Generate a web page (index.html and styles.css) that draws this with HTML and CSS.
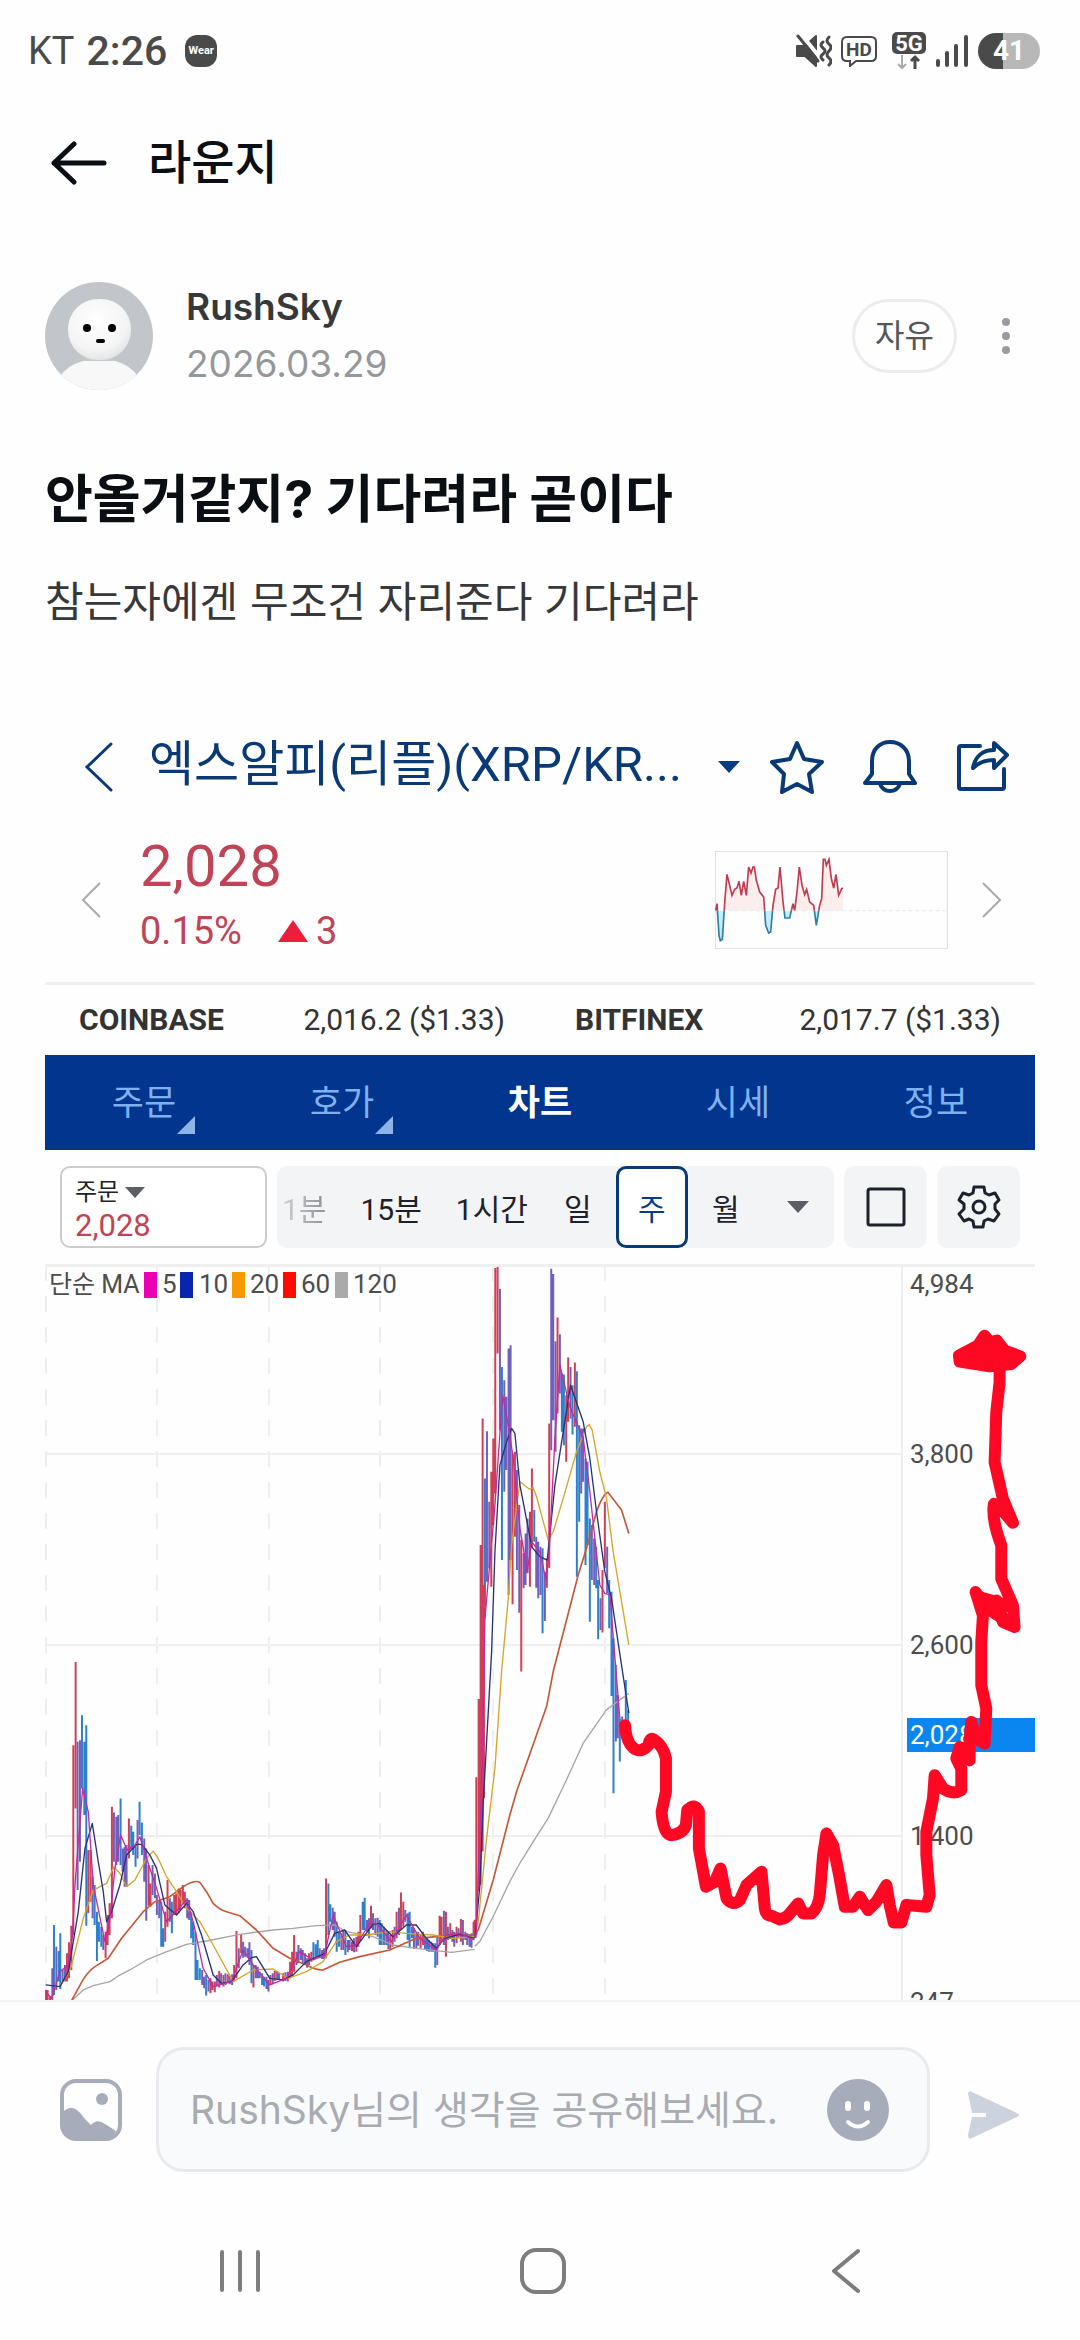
FILE: index.html
```html
<!DOCTYPE html>
<html lang="ko">
<head>
    <meta charset="UTF-8">
    <meta name="viewport" content="width=device-width, initial-scale=1.0">
    <title>라운지</title>
    <link rel="stylesheet" href="styles.css">
</head>
<body>
    <div class="status-bar">
        <div class="status-left">
            <span class="carrier">KT</span>
            <span class="clock">2:26</span>
            <span class="wear">Wear</span>
        </div>
        <div class="status-right">
            <svg width="38" height="34" viewBox="0 0 38 34" fill="none" stroke="#4a4a4a" stroke-linecap="round">
                <path d="M3 12h8l11-10v30l-11-10H3z" fill="#4a4a4a" stroke-width="2" stroke-linejoin="round"/>
                <path d="M7 0l20 25" stroke="#fefefe" stroke-width="4"/>
                <path d="M4 2l20 25" stroke-width="3"/>
                <path d="M29 8q-4 3 0 6t0 6 0 6M35 3q-4 4 0 7t0 7 0 7 0 7" stroke-width="3"/>
            </svg>
            <svg class="hd" width="36" height="32" viewBox="0 0 36 32">
                <path d="M6 2h24q5 0 5 5v14q0 5-5 5H15l-6 5v-5H6q-5 0-5-5V7q0-5 5-5z" fill="none" stroke="#4a4a4a" stroke-width="2"/>
                <text x="18" y="21" text-anchor="middle">HD</text>
            </svg>
            <svg class="net" width="34" height="38" viewBox="0 0 34 38">
                <rect width="34" height="22" rx="5" fill="#4a4a4a"/>
                <text x="17" y="19" text-anchor="middle">5G</text>
                <path d="M10 23v13M6 32l4 4 4-4" fill="none" stroke="#aaa" stroke-width="2"/>
                <path d="M23 37V25M19 29l4-4 4 4" fill="none" stroke="#4a4a4a" stroke-width="3"/>
            </svg>
            <svg width="34" height="34" viewBox="0 0 34 34" stroke="#4a4a4a" stroke-width="4" stroke-linecap="round">
                <path d="M3 27v4M12 19v12M21 12v19M31 3v28"/>
            </svg>
            <span class="battery">41</span>
        </div>
    </div>

    <header class="page-header">
        <button class="icon-btn" aria-label="뒤로">
            <svg width="56" height="44" viewBox="0 0 56 44" fill="none" stroke="#0b0e12" stroke-width="5" stroke-linecap="round" stroke-linejoin="round">
                <path d="M53 22H3M23 3L3 22l20 19"/>
            </svg>
        </button>
        <h1>라운지</h1>
    </header>

    <main class="post">
        <div class="author">
            <svg class="avatar" viewBox="0 0 108 108">
                <defs>
                    <clipPath id="round"><circle cx="54" cy="54" r="54"/></clipPath>
                    <radialGradient id="skin" cx="45%" cy="35%" r="70%">
                        <stop offset="0" stop-color="#fff"/>
                        <stop offset=".7" stop-color="#f4f4f5"/>
                        <stop offset="1" stop-color="#dfe0e2"/>
                    </radialGradient>
                </defs>
                <g clip-path="url(#round)">
                    <rect width="108" height="108" fill="#c2c6cb"/>
                    <path d="M10 108Q16 78 54 77q38 1 44 31z" fill="#f8f8f9"/>
                    <path d="M40 78h28" stroke="#c9cacd" stroke-width="2"/>
                    <rect x="23" y="17" width="63" height="61" rx="30" fill="url(#skin)"/>
                    <circle cx="42" cy="46" r="4"/>
                    <circle cx="67" cy="46" r="4"/>
                    <rect x="51" y="57" width="9" height="4" rx="2"/>
                </g>
            </svg>
            <div class="author-info">
                <strong>RushSky</strong>
                <time datetime="2026-03-29">2026.03.29</time>
            </div>
            <a class="tag" href="#">자유</a>
            <button class="icon-btn" aria-label="더보기">
                <svg width="16" height="38" viewBox="0 0 16 38" fill="#999c9f">
                    <circle cx="8" cy="5" r="4"/><circle cx="8" cy="19" r="4"/><circle cx="8" cy="33" r="4"/>
                </svg>
            </button>
        </div>

        <h2>안올거같지? 기다려라 곧이다</h2>
        <p class="post-text">참는자에겐 무조건 자리준다 기다려라</p>

        <section class="exchange">
            <div class="coin-bar">
                <button class="icon-btn" aria-label="이전">
                    <svg width="30" height="52" viewBox="0 0 30 52" fill="none" stroke="#0a3a75" stroke-width="3" stroke-linecap="round"><path d="M27 3L3 26l24 23"/></svg>
                </button>
                <span class="coin-name">엑스알피(리플)(XRP/KR...</span>
                <svg width="22" height="12" viewBox="0 0 22 12" fill="#0a3a7f"><path d="M0 0h22L11 12z"/></svg>
                <div class="coin-actions">
                    <button class="icon-btn" aria-label="관심">
                        <svg width="54" height="54" viewBox="0 0 54 54" class="line-icon"><path d="M27 3l7 16 18 3-13 12 3 18-15-8-15 8 2-18L2 22l18-3z"/></svg>
                    </button>
                    <button class="icon-btn" aria-label="알림">
                        <svg width="54" height="54" viewBox="0 0 54 54" class="line-icon"><path d="M9 34V21C9 9 17 2 27 2s19 7 19 19v13l6 9H2zM17 44c2 5 5 7 10 7s8-2 10-7"/></svg>
                    </button>
                    <button class="icon-btn" aria-label="공유">
                        <svg width="54" height="54" viewBox="0 0 54 54" class="line-icon"><path d="M24 6H5q-2 0-2 2v39q0 2 2 2h41q2 0 2-2V29M38 3l13 12-13 13v-8c-10 0-16 3-21 8 2-11 9-18 21-18z"/></svg>
                    </button>
                </div>
            </div>

            <div class="quote">
                <svg width="20" height="36" viewBox="0 0 20 36" fill="none" stroke="#aaa" stroke-width="2"><path d="M19 1L2 18l17 17"/></svg>
                <div class="quote-price">
                    <strong>2,028</strong>
                    <div class="quote-change">
                        <span>0.15%</span>
                        <svg width="30" height="22" viewBox="0 0 30 22" fill="#ec1f3b"><path d="M15 0l15 22H0z"/></svg>
                        <span>3</span>
                    </div>
                </div>
                <svg class="spark" viewBox="466 447 699 294">
                    <defs>
                        <clipPath id="above"><rect x="466" y="447" width="699" height="179"/></clipPath>
                        <clipPath id="below"><rect x="466" y="626" width="699" height="115"/></clipPath>
                        <path id="area" d="M468 626L472 605 478 700 482 716 488 712 496 590 502 517 510 550 517 580 525 562 532 558 538 538 545 580 552 538 560 580 567 495 574 513 580 495 584 495 590 535 600 570 612 585 618 670 627 693 633 690 640 610 648 562 655 558 661 495 670 600 676 648 690 648 700 605 705 625 712 570 719 495 727 550 735 578 741 562 750 600 762 610 770 670 780 610 786 590 791 472 796 472 800 490 808 472 815 530 822 558 829 517 837 580 846 560 850 558V626z"/>
                        <path id="trend" d="M468 626L472 605 478 700 482 716 488 712 496 590 502 517 510 550 517 580 525 562 532 558 538 538 545 580 552 538 560 580 567 495 574 513 580 495 584 495 590 535 600 570 612 585 618 670 627 693 633 690 640 610 648 562 655 558 661 495 670 600 676 648 690 648 700 605 705 625 712 570 719 495 727 550 735 578 741 562 750 600 762 610 770 670 780 610 786 590 791 472 796 472 800 490 808 472 815 530 822 558 829 517 837 580 846 560 850 558"/>
                    </defs>
                    <rect x="467" y="448" width="696" height="292" fill="none" stroke="#ddd" stroke-width="3"/>
                    <path d="M468 626h694" stroke="#ddd" stroke-width="2" stroke-dasharray="10 10"/>
                    <g clip-path="url(#above)">
                        <use href="#area" fill="#fdeeee"/>
                        <use href="#trend" fill="none" stroke="#c23a50" stroke-width="5"/>
                    </g>
                    <g clip-path="url(#below)">
                        <use href="#area" fill="#c8ecfa"/>
                        <use href="#trend" fill="none" stroke="#2b7ea8" stroke-width="5"/>
                    </g>
                </svg>
                <svg width="20" height="36" viewBox="0 0 20 36" fill="none" stroke="#aaa" stroke-width="2"><path d="M1 1l17 17L1 35"/></svg>
            </div>

            <div class="markets">
                <div><b>COINBASE</b><span>2,016.2 ($1.33)</span></div>
                <div><b>BITFINEX</b><span>2,017.7 ($1.33)</span></div>
            </div>

            <nav class="tabs">
                <a class="has-menu" href="#"><span>주문</span></a>
                <a class="has-menu" href="#"><span>호가</span></a>
                <a class="active" href="#"><span>차트</span></a>
                <a href="#"><span>시세</span></a>
                <a href="#"><span>정보</span></a>
            </nav>

            <div class="toolbar">
                <button class="order">
                    <span class="order-label">주문 <svg width="20" height="11" viewBox="0 0 20 11" fill="#5b5e62"><path d="M0 0h20L10 11z"/></svg></span>
                    <span class="order-price">2,028</span>
                </button>
                <div class="range">
                    <button class="faded">1분</button>
                    <button>15분</button>
                    <button>1시간</button>
                    <button>일</button>
                    <button class="selected">주</button>
                    <button>월</button>
                    <button class="more" aria-label="더 보기"><svg width="22" height="12" viewBox="0 0 22 12" fill="#5b5e62"><path d="M0 0h22L11 12z"/></svg></button>
                </div>
                <button class="tool" aria-label="전체 화면">
                    <svg width="40" height="40" viewBox="0 0 40 40" fill="none" stroke="#1d212b" stroke-width="3"><rect x="2" y="2" width="36" height="36" rx="2"/></svg>
                </button>
                <button class="tool" aria-label="설정">
                    <svg width="44" height="44" viewBox="0 0 44 44" fill="none" stroke="#1d212b" stroke-width="3" stroke-linejoin="round">
                        <path d="M17 2h10l1 6 4 2 6-2 4 7-4 4v5l4 5-5 7-6-2-4 2-1 6H17l-1-6-4-2-5 2-5-7 5-5v-5l-5-4 4-7 6 2 4-2z"/>
                        <circle cx="22" cy="22" r="6"/>
                    </svg>
                </button>
            </div>

            <svg class="chart" viewBox="0 0 990 740">
                <!-- grid -->
                <g stroke="#eeeff0" stroke-width="2">
                    <path d="M0 1.5h990" stroke-width="3"/>
                    <path d="M0 190h857M0 381h857M0 572h857M857 2v738"/>
                    <path d="M1 2v738M112 2v738M224 2v738M335 2v738M448 2v738M560 2v738" stroke-dasharray="16 15" stroke-dashoffset="1"/>
                </g>

                <g class="legend">
                    <text class="legend-name" x="4" y="29">단순 MA</text>
                    <rect x="99" y="8" width="13" height="26" fill="#ec00b4"/><text x="117" y="29">5</text>
                    <rect x="135" y="8" width="13" height="26" fill="#0a24ac"/><text x="154" y="29">10</text>
                    <rect x="187" y="8" width="13" height="26" fill="#f59b00"/><text x="205" y="29">20</text>
                    <rect x="238" y="8" width="13" height="26" fill="#ff0c00"/><text x="256" y="29">60</text>
                    <rect x="290" y="8" width="13" height="26" fill="#aaa"/><text x="308" y="29">120</text>
                </g>

                <!-- candles, low years -->
                <g transform="translate(-5 338) scale(.333)" fill="none">
                    <path class="up" d="M17 1165V1200M23 1165V1200M30 1185V1202M81 1055V1140M87 1022V1130M94 972V1105M100 430V1000M107 180V620M145 745V935M152 745V900M197 990V1070M203 940V1030M209 905V1000M216 615V950M267 650V770M326 790V912M332 845V915M376 930V1020M383 835V975M403 880V940M409 875V940M416 860V935M422 865V925M429 850V905M435 870V920M512 1130V1175M518 1140V1165M525 1140V1172M538 1108V1158M551 1120V1155M564 1118V1145M583 1090V1140M590 988V1130M604 998V1055M641 1090V1158M692 1120V1150M705 1107V1138M730 1115V1140M744 1110V1140M751 1080V1130M757 1050V1120M763 1000V1110M808 1055V1090M815 1050V1080M859 830V1070M911 985V1045M937 1020V1048M950 1005V1050M956 990V1035M962 940V1020M994 912V980M1052 1000V1045M1059 985V1035M1071 930V1010M1084 872V985M1091 900V975M1143 1000V1040M1150 990V1030M1200 942V1030M1206 945V1020M1219 930V1065M1232 965V1012M1251 975V1025M1264 952V1020M1302 960V1010"/>
                    <path class="down" d="M42 970V1180M56 1048V1140M61 995V1162M126 340V560M133 420V640M139 370V972M164 850V970M171 930V1078M177 960V1020M184 975V1035M242 590V790M274 672V745M280 690V760M287 735V795M299 600V700M306 662V760M364 900V1035M370 980V1035M396 900V995M454 930V1010M460 960V1030M467 990V1135M473 1075V1135M480 1100V1135M499 1120V1182M616 1035V1065M635 1045V1145M667 1115V1150M673 1125V1155M821 1022V1075M828 1028V1065M834 1015V1065M866 845V1000M872 908V960M891 960V1050M898 990V1035M917 985V1060M969 900V985M975 888V985M1020 955V1030M1026 965V1030M1104 935V1015M1110 930V1040M1162 1010V1048M1168 1015V1050M1187 1025V1098"/>
                    <path class="mixed" d="M37 1100V1200M49 1035V1165M68 1105V1140M75 1090V1140M113 420V865M120 415V780M158 825V950M190 1000V1045M222 632V780M229 645V790M235 640V780M248 740V810M254 735V855M260 730V855M293 655V770M313 710V840M319 740V957M338 790V880M345 815V890M351 880V940M358 895V950M390 890V960M442 890V950M448 895V955M487 1105V1150M493 1125V1160M506 1135V1170M531 1120V1155M544 1115V1150M557 1115V1150M570 1122V1148M577 1118V1150M597 1040V1100M610 1020V1068M623 1040V1068M629 1022V1090M648 1090V1130M654 1095V1130M660 1110V1130M680 1125V1162M686 1135V1170M699 1115V1148M712 1108V1135M718 1115V1135M737 1112V1138M770 1050V1090M776 1030V1085M783 1040V1075M789 1045V1085M796 1055V1088M802 1070V1098M840 1040V1070M847 1045V1072M853 1040V1072M879 918V985M885 930V1005M905 995V1045M924 1015V1052M930 1015V1045M943 1010V1052M982 955V990M988 950V1010M1000 935V985M1007 950V1000M1014 948V1005M1033 975V1030M1040 985V1030M1046 990V1042M1065 975V1020M1078 918V1000M1097 925V960M1117 975V1010M1123 980V1042M1130 995V1040M1136 990V1032M1156 1010V1045M1175 1020V1050M1181 1025V1050M1193 1000V1090M1213 927V1030M1225 975V1015M1238 985V1020M1244 990V1035M1257 980V1010M1270 955V1030M1277 990V1015M1283 995V1030M1290 998V1035M1296 995V1038"/>
                    <path class="ma120" d="M17 1200H93L130 1165 160 1152 210 1140 235 1123 270 1105 320 1075 375 1052 440 1028 500 1018 600 998 700 985 760 980 830 972 885 970 920 990 1000 1005 1060 1030 1130 1040 1180 1046 1235 1052 1305 1043"/>
                    <path class="ma60" d="M93 1200L115 1160 Q140 1110 165 1095 L205 1070 245 1010 310 930 345 900 390 885 430 855Q465 833 480 842L500 870 520 905Q540 925 560 930L600 942 650 985 700 1040 750 1070 800 1090Q830 1106 850 1105L900 1082 960 1065 1050 1045 1130 1010 1190 1005 1250 998 1305 1002"/>
                    <path class="ma20" d="M60 1150Q90 1120 100 1070L130 950 160 865 200 845 222 795 240 815 260 855 285 835 320 770 340 748 355 770 380 825 410 870 440 920 480 960 520 1030 580 1140 640 1105 700 1102 745 1130 800 1110 850 1080 890 1020 930 1000 980 1000 1050 990 1100 995 1180 1000 1240 1010 1305 1005"/>
                    <path class="ma10" d="M17 1150L60 1155 85 1110 95 1050 115 930 135 740 157 665 175 780 190 870 200 960 215 930 240 850 260 760 290 728 305 728 330 760 350 800 375 910 410 940 440 905 460 930 485 1000 520 1120 545 1145 575 1140 610 1090 635 1068 650 1065 690 1130 730 1135 760 1120 800 1080 855 1055 885 995 915 985 950 1035 1000 968 1020 965 1060 1005 1100 970 1130 970 1160 1010 1190 1040 1215 1010 1260 998 1305 1010"/>
                    <path class="ma5" d="M17 1170L35 1190 60 1110 85 1090 98 1000 105 850 128 560 145 630 160 850 195 1020 210 950 225 800 242 700 262 745 285 730 300 705 330 800 350 860 380 960 440 895 460 960 490 1100 520 1155 575 1140 610 1045 640 1090 690 1150 740 1130 780 1050 820 1075 855 1060 880 940 920 1035 950 1030 990 965 1010 965 1055 1020 1100 940 1140 1010 1190 1045 1220 1000 1260 995 1305 1015"/>
                </g>

                <!-- candles, rally and fall -->
                <g transform="translate(395 -12) scale(.333)" fill="none">
                    <path class="mixed" d="M141 538V990M148 750V950M180 110V535M193 385V720M199 435V655M206 290V1030M212 280V925M231 655V955M238 760V1083M251 905V1010M257 845V1000M263 800V965M289 855V1008M295 870V1040M302 885V1030M315 960V1108M334 50V595M340 66V505M347 268V600M360 247V425M392 345V500M424 530V725M430 530V690M456 820V985M463 860V1000M482 1040V1135M502 885V1025M528 1240V1470M534 1330V1460M547 1395V1440"/>
                    <path class="down" d="M135 680V1100M186 345V925M283 775V870M308 890V1145M366 365V540M372 368V580M398 400V548M411 358V975M418 520V810M437 620V940M443 630V880M450 800V1110M469 885V1010M475 985V1163M508 985V1130M515 1020V1333M521 1160V1625M540 1400V1530M558 1285V1410M565 1375V1410"/>
                    <path class="up" d="M104 2005V2050M109 1577V2050M116 1342V1920M122 880V1900M128 500V1800M132 1000V1640M154 660V1005M160 560V820M166 48V725M173 45V305M218 605V1058M225 600V855M244 865V1260M270 780V1005M276 650V890M321 920V1008M328 515V950M353 197V485M379 430V630M385 317V510M405 332V525M488 955V1143M495 750V950"/>
                    <path class="ma120" d="M105 2085L120 2070 160 1995 210 1890 240 1835 290 1755 325 1700 380 1585 430 1475 500 1375 540 1345 567 1325"/>
                    <path class="ma60" d="M105 2052L115 2035 160 1885 210 1690 230 1620 320 1365 340 1260 415 970 440 890 470 780Q490 725 505 722L545 775 567 845"/>
                    <path class="ma20" d="M105 2055L115 2010 140 1760 165 1550 185 1260 205 1040 215 880 240 690 268 712 280 708 290 735 325 865 340 840 370 740 410 600 440 525 448 518 457 535 480 660 500 740 520 900 567 1180"/>
                    <path class="ma10" d="M105 2060L120 1900 130 1650 155 1200 165 900 180 640 200 570 215 530 225 545 240 700 265 830 275 885 300 915 322 925 345 700 370 540 392 400 430 510 450 620 470 780 495 960 515 1040 545 1240 567 1385"/>
                    <path class="ma5" d="M108 2060L125 1600 135 1100 165 760 188 430 205 520 220 620 240 830 262 960 275 870 300 900 318 985 328 900 345 560 360 340 390 465 430 560 450 720 480 1000 495 1025 510 1030 540 1400"/>
                </g>

                <!-- price axis -->
                <rect x="862" y="454" width="128" height="34" fill="#0b86f0"/>
                <g class="axis">
                    <text x="865" y="29">4,984</text>
                    <text x="865" y="199">3,800</text>
                    <text x="865" y="390">2,600</text>
                    <text x="865" y="480" fill="#fff">2,028</text>
                    <text x="865" y="581">1,400</text>
                    <text x="865" y="747">247</text>
                </g>

                <!-- hand-drawn forecast -->
                <g class="pen" transform="translate(555 378) scale(.333)">
                    <path d="M75 250Q78 300 100 318T145 310Q150 285 160 292 190 310 198 350V450L185 510Q190 580 215 580 250 575 258 550L262 505Q285 480 297 510V620L318 735 345 720 362 680 380 770Q400 795 420 775L440 730 485 690 495 800Q497 822 515 822L540 833Q560 830 570 815L595 785 610 815H635Q655 800 660 760L670 640 680 575 700 610 718 700 735 795H760L780 765 805 805 830 780 860 730 870 790 882 842H905L920 790 980 795 990 760 980 640V570L1000 470 1005 400 1030 440Q1060 460 1085 445V380L1070 350 1080 315 1110 355 1110 290 1115 240 1130 290 1155 305 1160 200 1145 130V0L1150 -80 1128 -150 1165 -95 1190 -125 1210 -60 1245 -45 1240 -110 1205 -190V-290Q1175 -370 1183 -415L1200 -405 1240 -358 1210 -430 1185 -540 1190 -690 1200 -780V-840"/>
                    <path d="M1078 -860L1135 -890 1155 -920 1170 -900 1192 -905 1215 -875 1262 -858 1235 -835 1170 -828 1080 -842z" fill="#fe0824"/>
                    <path d="M1138 -135L1225 -60 1180 -90 1225 -110z" fill="#fe0824"/>
                </g>
            </svg>
        </section>
    </main>

    <form class="comment-bar">
        <button class="icon-btn" type="button" aria-label="사진">
            <svg width="62" height="62" viewBox="0 0 62 62">
                <rect x="2" y="2" width="58" height="58" rx="14" fill="none" stroke="#a6acb9" stroke-width="4"/>
                <path d="M2 34q11-12 22 5l7 7q6-7 14-1l11 7q-3 8-12 8H16Q2 60 2 46z" fill="#a6acb9"/>
                <circle cx="42" cy="20" r="6" fill="#a6acb9"/>
            </svg>
        </button>
        <div class="comment-box">
            <input type="text" aria-label="댓글" placeholder="RushSky님의 생각을 공유해보세요.">
            <button class="icon-btn" type="button" aria-label="이모티콘">
                <svg width="62" height="62" viewBox="0 0 62 62">
                    <circle cx="31" cy="31" r="31" fill="#a6acb9"/>
                    <rect x="18" y="22" width="6" height="10" rx="3" fill="#fff"/>
                    <rect x="37" y="22" width="6" height="10" rx="3" fill="#fff"/>
                    <path d="M21 43q10 9 20 0" fill="none" stroke="#fff" stroke-width="4" stroke-linecap="round"/>
                </svg>
            </button>
        </div>
        <button class="icon-btn send" type="submit" aria-label="보내기">
            <svg width="52" height="48" viewBox="0 0 52 48" fill="#cdd3de"><path d="M0 3Q0-1 4 1l45 21q4 2 0 4L4 47q-4 2-4-3l4-18h14v-4H4z"/></svg>
        </button>
    </form>

    <nav class="system-nav">
        <button class="icon-btn" aria-label="최근 앱">
            <svg width="44" height="46" viewBox="0 0 44 46" stroke="#7d7d7d" stroke-width="4" stroke-linecap="round"><path d="M4 4v38M22 4v38M40 4v38"/></svg>
        </button>
        <button class="icon-btn" aria-label="홈">
            <svg width="46" height="46" viewBox="0 0 46 46" fill="none" stroke="#7d7d7d" stroke-width="4"><rect x="2" y="2" width="42" height="42" rx="14"/></svg>
        </button>
        <button class="icon-btn" aria-label="뒤로 가기">
            <svg width="44" height="46" viewBox="0 0 44 46" fill="none" stroke="#7d7d7d" stroke-width="4" stroke-linecap="round" stroke-linejoin="round"><path d="M34 3L10 23l24 20"/></svg>
        </button>
    </nav>
</body>
</html>
```
FILE: styles.css
```css
* {
    box-sizing: border-box;
}
body {
    margin: 0;
    height: 100vh;
    display: flex;
    flex-direction: column;
    background: #fefefe;
    color: #0b0e12;
    font-family: Inter, "Noto Sans CJK KR", sans-serif;
}
button {
    font-family: inherit;
    border: none;
    background: none;
    padding: 0;
    color: inherit;
}
svg {
    display: block;
    flex-shrink: 0;
}
a {
    color: inherit;
    text-decoration: none;
}

/* phone status bar */
.status-bar {
    display: flex;
    justify-content: space-between;
    align-items: center;
    height: 102px;
    padding: 0 40px 0 28px;
    font-family: Roboto, sans-serif;
    color: #4a4a4a;
}
.status-left, .status-right {
    display: flex;
    align-items: center;
}
.carrier {
    font-size: 38px;
    margin-right: 12px;
}
.clock {
    font-size: 41px;
    font-weight: 500;
    margin-right: 18px;
}
.wear {
    width: 32px;
    height: 32px;
    line-height: 32px;
    border-radius: 12px;
    background: #4a4a4a;
    color: #fff;
    font-size: 11px;
    font-weight: 700;
    text-align: center;
}
.status-right {
    gap: 9px;
}
.hd {
    margin-right: 6px;
}
.hd text {
    font-size: 19px;
    font-weight: 700;
    fill: #4a4a4a;
}
.net text {
    font-size: 22px;
    font-weight: 700;
    fill: #fff;
}
.battery {
    width: 62px;
    height: 36px;
    line-height: 36px;
    border-radius: 18px;
    background: linear-gradient(90deg, #4a4a4a 41%, #b8b8b8 41%);
    color: #fff;
    font-size: 28px;
    font-weight: 700;
    text-align: center;
}

.page-header {
    display: flex;
    align-items: center;
    gap: 41px;
    height: 122px;
    padding: 0 51px;
}
.page-header h1 {
    margin: 0;
    font-size: 47px;
    line-height: 60px;
    padding-bottom: 2px;
    font-weight: 500;
}

/* post */
.post {
    flex: 1;
    min-height: 0;
    overflow: hidden;
    padding: 54px 45px 0;
}
.author {
    display: flex;
    align-items: center;
}
.avatar {
    width: 108px;
    height: 108px;
}
.author-info {
    flex: 1;
    display: flex;
    flex-direction: column;
    margin-left: 33px;
    padding-bottom: 2px;
    font-size: 37px;
    line-height: 57px;
}
.author-info strong {
    font-weight: 600;
    color: #37383a;
}
.author-info time {
    color: #95989b;
}
.tag {
    border: 3px solid #ebecee;
    border-radius: 37px;
    padding: 0 20px;
    font-size: 32px;
    line-height: 68px;
    color: #55585b;
    margin-right: 41px;
}
.author .icon-btn {
    margin-right: 21px;
}
.post h2 {
    margin: 66px 0 0;
    font-size: 52px;
    line-height: 80px;
    font-weight: 700;
}
.post-text {
    margin: 30px 0 0;
    font-size: 42px;
    line-height: 64px;
    color: #37383a;
}

/* exchange screen */
.exchange {
    margin-top: 88px;
    font-family: Roboto, "Noto Sans CJK KR", sans-serif;
}
.coin-bar {
    display: flex;
    align-items: center;
    height: 90px;
    padding: 0 25px 0 39px;
    color: #0a3a75;
}
.coin-name {
    flex: 1;
    margin-left: 35px;
    padding-bottom: 4px;
    font-size: 49px;
    line-height: 70px;
    white-space: nowrap;
}
.coin-actions {
    display: flex;
    gap: 39px;
    margin-left: 30px;
}
.line-icon {
    fill: none;
    stroke: #0a3a75;
    stroke-width: 4;
    stroke-linejoin: round;
    stroke-linecap: round;
}
.quote {
    display: flex;
    align-items: center;
    height: 170px;
    padding: 6px 33px 0 36px;
}
.quote-price {
    flex: 1;
    margin-left: 39px;
    padding-bottom: 8px;
    color: #bf4455;
}
.quote-price strong {
    display: block;
    font-size: 58px;
    line-height: 70px;
    font-weight: 400;
}
.quote-change {
    display: flex;
    align-items: center;
    font-size: 38px;
    line-height: 60px;
}
.quote-change svg {
    margin: 0 8px 0 36px;
}
.spark {
    width: 233px;
    height: 98px;
    margin-right: 34px;
}
.markets {
    display: grid;
    grid-template-columns: 1fr 1fr;
    column-gap: 70px;
    align-items: center;
    height: 73px;
    padding: 0 34px;
    border-top: 3px solid #eeefef;
    font-size: 30px;
    line-height: 70px;
    white-space: nowrap;
    color: #333;
}
.markets div {
    display: flex;
    justify-content: space-between;
}
.tabs {
    display: grid;
    grid-template-columns: repeat(5, 1fr);
    height: 95px;
    background: #01358e;
    color: #7fb0ef;
    font-size: 35px;
    line-height: 97px;
    text-align: center;
}
.tabs .active {
    color: #fff;
    font-weight: 700;
}
.tabs span {
    position: relative;
}
.has-menu span::after {
    content: "";
    position: absolute;
    right: -19px;
    bottom: -10px;
    border-left: 18px solid transparent;
    border-bottom: 18px solid #8fb4e8;
}
.toolbar {
    display: flex;
    gap: 10px;
    padding: 16px 15px;
    color: #1d212b;
}
.order {
    width: 207px;
    height: 82px;
    padding: 0 13px;
    border: 2px solid #ccc;
    border-radius: 10px;
    background: #fff;
    text-align: left;
}
.order-label {
    display: flex;
    align-items: center;
    gap: 6px;
    margin-top: 4px;
    font-size: 24px;
    line-height: 34px;
}
.order-price {
    display: block;
    font-size: 31px;
    line-height: 34px;
    color: #bf4455;
}
.range {
    flex: 1;
    display: flex;
    height: 82px;
    border-radius: 10px;
    background: #f3f4f6;
    overflow: hidden;
}
.range button {
    min-width: 66px;
    padding: 0 17px;
    font-size: 30px;
    white-space: nowrap;
}
.range .faded {
    padding-left: 5px;
    background: linear-gradient(90deg, #d5d7da, #77797d);
    background-clip: text;
    color: transparent;
}
.range .selected {
    width: 72px;
    padding: 0;
    margin: 0 5px;
    border: 3px solid #0a3a75;
    border-radius: 10px;
    background: #fff;
    color: #0a3a8f;
}
.range .more {
    margin-left: auto;
    padding: 0 25px;
}
.tool {
    display: grid;
    place-items: center;
    width: 83px;
    height: 82px;
    border-radius: 10px;
    background: #f3f4f6;
}

/* chart */
.chart {
    width: 100%;
    overflow: hidden;
}
.legend text, .axis text {
    font-size: 26px;
}
.legend .legend-name {
    font-size: 25px;
}
.legend text, .axis {
    fill: #4d4d4d;
}
.chart .up {
    stroke: #cf4058;
    stroke-width: 6;
}
.chart .down {
    stroke: #2c80cc;
    stroke-width: 6;
}
.chart .mixed {
    stroke: #7060bc;
    stroke-width: 6;
}
.ma5, .ma10, .ma20, .ma60, .ma120 {
    stroke-width: 4;
    stroke-linejoin: round;
}
.ma5 {
    stroke: #c32aa0;
}
.ma10 {
    stroke: #273278;
}
.ma20 {
    stroke: #d3a52c;
}
.ma60 {
    stroke: #c4583a;
    stroke-width: 5;
}
.ma120 {
    stroke: #a5a5a5;
}
.pen {
    fill: none;
    stroke: #fe0824;
    stroke-width: 36;
    stroke-linejoin: round;
    stroke-linecap: round;
}

/* comment form */
.comment-bar {
    display: flex;
    align-items: center;
    gap: 34px;
    padding: 45px 60px 36px;
    border-top: 2px solid #f3f3f4;
}
.comment-box {
    flex: 1;
    display: flex;
    align-items: center;
    height: 125px;
    padding: 0 38px 0 31px;
    border: 3px solid #e8eaed;
    border-radius: 28px;
    background: #f9fafc;
}
.comment-box input {
    flex: 1;
    min-width: 0;
    border: none;
    padding: 0;
    background: none;
    font-family: inherit;
    font-size: 39px;
}
.comment-box input::placeholder {
    color: #a8acb2;
}
.send {
    margin: 10px 0 0 4px;
}
.system-nav {
    display: flex;
    justify-content: space-between;
    padding: 40px 212px 46px 218px;
}
```
